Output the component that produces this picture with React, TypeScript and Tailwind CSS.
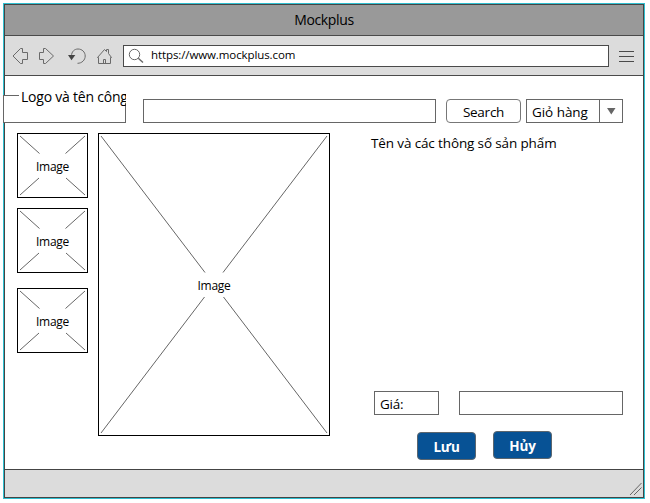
import React from "react";

function Placeholder({ width, height, gapTop, gapX }: { width: number; height: number; gapTop: number; gapX: number }) {
  const w = width;
  const h = height;
  return (
    <div className="relative flex shrink-0 items-center justify-center border border-black" style={{ width, height }}>
      <svg className="absolute -left-px -top-px" width={w} height={h} fill="none" stroke="#666" strokeWidth="1">
        <path d={`M3 3L${gapX} ${gapTop}M${w - 3} 3L${w - gapX} ${gapTop}M3 ${h - 3}L${gapX - 0.5} ${h - gapTop + 0.5}M${w - 3} ${h - 3}L${w - gapX + 0.5} ${h - gapTop + 0.5}`} />
      </svg>
      <span className="relative top-px text-[12px] leading-[16px] tracking-[-0.25px]">Image</span>
    </div>
  );
}

function Toolbar() {
  return (
    <div className="flex h-[40px] shrink-0 items-start border-b border-[#4a4a4a] bg-[#dcdcdc]">
      <svg className="mt-[8px] shrink-0" width="118" height="24" viewBox="5 44 118 24" fill="none" stroke="#6a6a6a" strokeWidth="1">
        <path d="M13 56L20.5 48.5H22.5V52.5H27.5V59.5H22.5V63.5H20.5Z" />
        <path d="M53.5 56L45.5 48.5H43.5V52.5H39.5V59.5H43.5V63.5H45.5Z" />
        <path d="M71.5 56C71.5 51.5 74.5 49 78 49C82 49 85.2 52 85.2 56C85.2 60 82 63.3 77.5 63.3" />
        <path d="M68 55H75.3L71.5 60.3Z" fill="#444" stroke="none" />
        <path d="M97.5 57.5L104.5 49.5L106.5 51.5V49.5H108.5V53.5L111.5 57.5H110.5V63.5H98.5V57.5ZM103.5 63.5V59.5H105.5V63.5" />
      </svg>
      <div className="mt-[9px] flex h-[22px] w-[486px] shrink-0 items-start border border-[#4a4a4a] bg-white">
        <svg className="shrink-0" width="24" height="20" viewBox="124 46 24 20" fill="none" stroke="#666">
          <circle cx="134.5" cy="54.5" r="5.2" />
          <path d="M138.3 58.3L143 62.5" strokeWidth="1.4" />
        </svg>
        <span className="ml-[3px] mt-px text-[11.5px] leading-[16px] tracking-[-0.1px]">https://www.mockplus.com</span>
      </div>
      <div className="ml-[10px] mt-[15px] flex w-[15px] flex-col gap-1">
        <div className="h-px bg-[#4a4a4a]" />
        <div className="h-px bg-[#4a4a4a]" />
        <div className="h-px bg-[#4a4a4a]" />
      </div>
    </div>
  );
}

export default function App() {
  return (
    <div className="h-[503px] w-[650px] bg-white pl-[3px] pt-[3px] font-['Open_Sans','Noto_Sans',sans-serif] text-black">
      <div className="h-[496px] w-[642px] border border-[#2fbfd0]">
        <div className="flex h-full flex-col border border-[#444]">
          <header className="flex h-[31px] shrink-0 justify-center border-b border-[#4a4a4a] bg-[#999] pt-[5px] text-[14px] leading-[20px] tracking-[-0.35px]">
            Mockplus
          </header>
          <Toolbar />
          <main className="h-[393px] shrink-0">
            <div className="flex h-[57px] items-start pt-[23px]">
              <div className="relative -ml-[2px] -mt-[4px] h-[28px] w-[123px] shrink-0 border-b border-l border-[#666] bg-white">
                <div className="h-px w-[15px] bg-[#666]" />
                <div className="absolute bottom-0 right-0 top-[8px] w-px bg-[#666]" />
                <div className="absolute -top-[10px] left-[17px] w-[105px] overflow-hidden whitespace-nowrap text-[14px] leading-[23px] tracking-[-0.22px]">
                  Logo và tên công
                </div>
              </div>
              <div className="ml-[17px] h-[24px] w-[293px] shrink-0 border border-[#666]" />
              <div className="ml-[10px] flex h-[24px] w-[75px] shrink-0 justify-center rounded border border-[#777] pt-[2px] text-[13.5px] leading-[20px] tracking-[-0.25px]">
                Search
              </div>
              <div className="ml-[5px] flex h-[24px] w-[97px] shrink-0 border border-[#666]">
                <div className="w-[73px] border-r border-[#666] pl-[5px] pt-[2px] text-[13.5px] leading-[20px] tracking-[-0.05px]">Giỏ hàng</div>
                <svg width="22" height="22" viewBox="600 100 22 22">
                  <path d="M607 108H615.5L611.3 114.5Z" fill="#666" />
                </svg>
              </div>
            </div>
            <div className="flex h-[336px] items-start pl-[12px]">
              <div className="flex flex-col">
                <Placeholder width={71} height={65} gapTop={20.5} gapX={22.5} />
                <div className="mt-[10px]"><Placeholder width={71} height={65} gapTop={20.5} gapX={22.5} /></div>
                <div className="mt-[15px]"><Placeholder width={71} height={65} gapTop={20.5} gapX={22.5} /></div>
              </div>
              <div className="ml-[10px]"><Placeholder width={232} height={303} gapTop={139.5} gapX={107} /></div>
              <section className="ml-[41px] flex w-[260px] flex-col">
                <p className="h-[258px] whitespace-nowrap text-[13.5px] leading-[20px] tracking-[-0.13px]">Tên và các thông số sản phẩm</p>
                <div className="ml-[3px] flex gap-5">
                  <div className="h-[24px] w-[65px] border border-[#666] pl-[5px] pt-[2px] text-[13.5px] leading-[20px] tracking-[-0.2px]">Giá:</div>
                  <div className="h-[24px] w-[164px] border border-[#666]" />
                </div>
                <div className="ml-[46px] mt-[16px] flex gap-[17px] text-[13.5px] font-bold leading-[20px] tracking-[-0.2px] text-white">
                  <div className="mt-px flex h-[28px] w-[59px] justify-center rounded border border-[#5c666e] bg-[#075295] pt-[4px]">Lưu</div>
                  <div className="flex h-[28px] w-[59px] justify-center rounded border border-[#5c666e] bg-[#075295] pt-[4px]">Hủy</div>
                </div>
              </section>
            </div>
          </main>
          <footer className="flex flex-1 items-end justify-end border-t border-[#444] bg-[#dcdcdc]">
            <svg width="16" height="16" viewBox="627 481 16 16" stroke="#666" strokeWidth="1">
              <path d="M630 495L641.5 483M634 495L641.5 487.5" />
            </svg>
          </footer>
        </div>
      </div>
    </div>
  );
}
